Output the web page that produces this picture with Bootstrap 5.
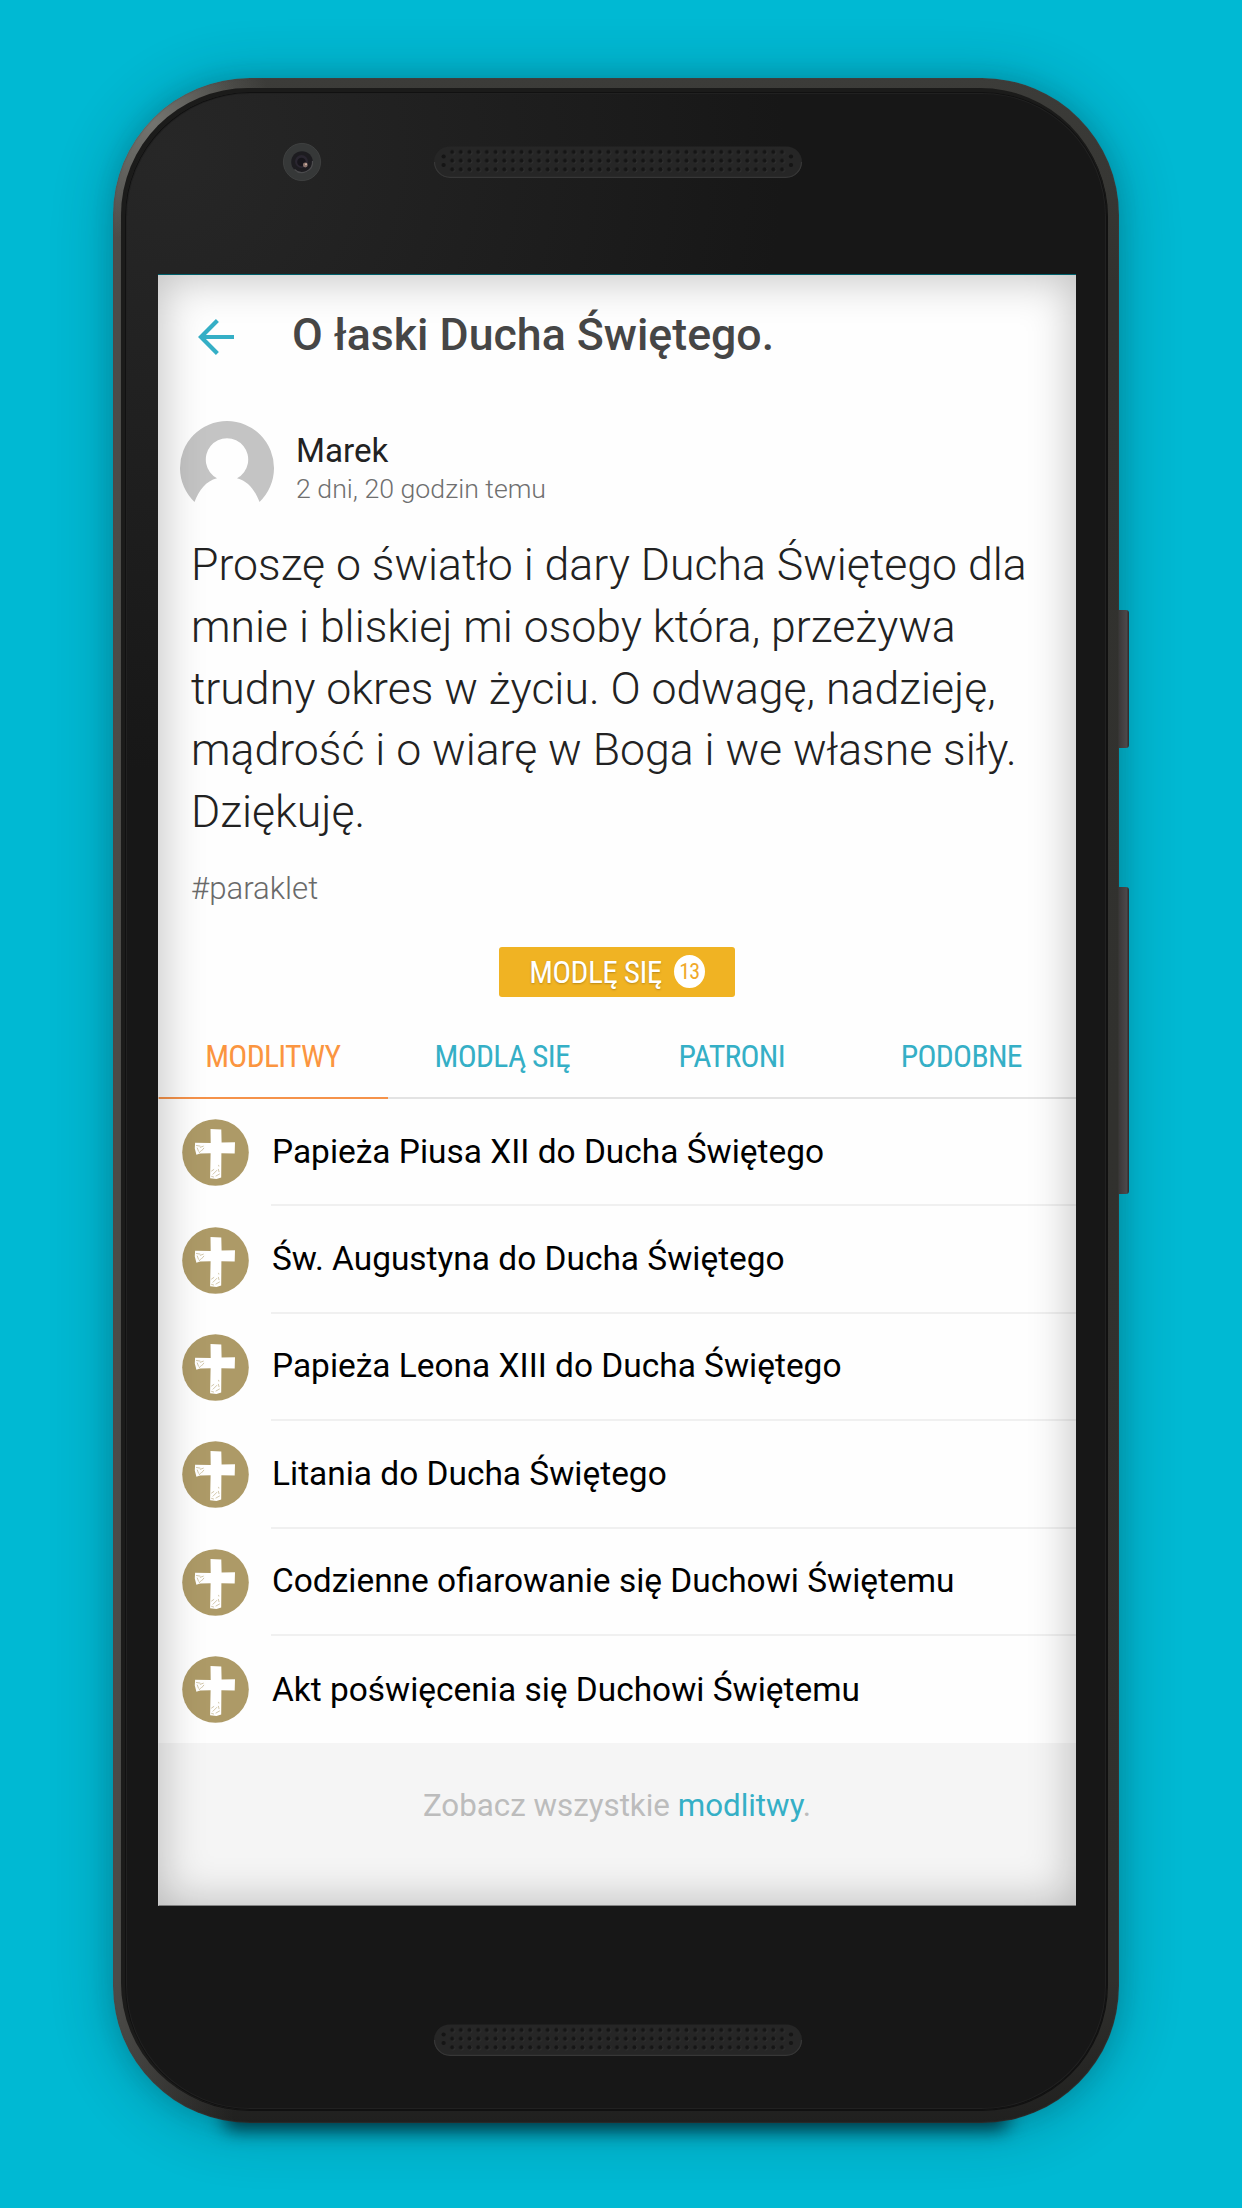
<!DOCTYPE html>
<html lang="pl">
<head>
<meta charset="utf-8">
<meta name="viewport" content="width=device-width, initial-scale=1">
<title>O łaski Ducha Świętego.</title>
<link rel="stylesheet" href="https://cdn.jsdelivr.net/npm/bootstrap@5.3.0/dist/css/bootstrap.min.css">
<style>
  body { background: #00b9d3; font-family: Roboto, "Liberation Sans", sans-serif; height: 2208px; overflow: hidden; padding: 78px 0 0 113px; }
  .phone {
    width: 1006px; height: 2045px; padding: 14px 12px 13px; border-radius: 137px;
    background: radial-gradient(circle 120px at 40px 45px, rgba(130,130,125,.75), rgba(130,130,125,0)), linear-gradient(90deg, rgba(95,94,91,.6) 0, rgba(95,94,91,0) 12%), linear-gradient(180deg, #3c3c39 0, #32322f 10%, #30302d 93%, #20201f 100%);
    box-shadow: inset 0 0 2px #444, 0 4px 60px rgba(0,35,45,.30), 0 0 22px rgba(0,40,50,.14);
  }
  .ground-shadow { left: 110px; right: 110px; bottom: 2px; height: 24px; border-radius: 12px; background: #10343a; box-shadow: 0 9px 18px rgba(0,20,28,.75); z-index: -1; }
  .side-key { left: 1006px; width: 10px; border-radius: 0 3px 3px 0; background: linear-gradient(90deg, #3b3839, #4b484a 75%, #2a2a2a); }
  .key-power { top: 532px; height: 138px; }
  .key-volume { top: 809px; height: 307px; }
  .glass {
    border-radius: 125px; padding: 182px 0 0 33px;
    background: radial-gradient(ellipse 620px 620px at 40px 60px, #272727, rgba(24,24,24,0)), #171717;
    box-shadow: inset 0 0 0 1px #111, inset 0 0 0 2px #212121, -2px -2px 0 2px #1b1b1a, 0 0 0 1px #111;
  }
  .glass > .grille { left: 50%; transform: translateX(-50%); margin-left: 2px; width: 370px; height: 34px; }
  .grille-top { top: 53px; }
  .grille-bottom { top: 1931px; }
  .lens { left: 157px; top: 50px; width: 40px; height: 40px; }
  .screen { width: 918px; height: 1632px; background: #fefefe; border-top: 1px solid #00606b; }
  .screen::after { content: ""; position: absolute; inset: 0; box-shadow: inset 0 0 44px 4px rgba(0,0,0,.24), inset 1px 0 0 rgba(255,255,255,.6), inset 0 -1px 0 rgba(60,60,60,.5); pointer-events: none; }
  .app-bar { height: 121px; padding-left: 40px; gap: 58px; }
  .app-bar svg { margin-top: 2px; }
  .app-title { font-size: 44.65px; font-weight: 500; color: #464646; line-height: 1.2; }
  .author { padding: 25px 22px 0; gap: 22px; }
  .author-name { font-size: 33.2px; line-height: 38px; color: #222; margin-top: 11px; }
  .author-time { font-size: 26.7px; line-height: 38px; font-weight: 300; color: #6f6f6f; }
  .prayer-text { margin: 20px 0 0 33px; width: 860px; font-size: 44.6px; line-height: 61.8px; font-weight: 300; color: #222; }
  .prayer-tag { margin: 25px 0 0 33px; font-size: 31.2px; line-height: 40px; font-weight: 300; color: #6a6a6a; }
  .narrow { font-family: "Roboto Condensed", Roboto, sans-serif; }
  .btn-pray, .btn-pray:hover { width: 236px; height: 50px; margin-top: 38px; padding: 2px 0 0; border: 0; border-radius: 3px; background: #f0b323; color: #fff; font-size: 31.4px; letter-spacing: -.6px; line-height: 50px; gap: 12px; text-shadow: 0 1px 2px rgba(90,60,0,.35); }
  .pray-count { width: 31px; height: 33px; margin-top: -2px; border-radius: 50%; background: #fff; color: #f0a92a; font-size: 22px; line-height: 33px; letter-spacing: -.9px; text-shadow: none; }
  .tab-strip { margin-top: 18px; height: 84px; border: 0; box-shadow: inset 0 -2px 0 #e3e3e3; }
  .tab-strip .nav-link { padding: 0; border-radius: 0; height: 84px; line-height: 83px; font-size: 31.6px; letter-spacing: -.7px; color: #35afc6; }
  .tab-strip .nav-link.active { color: #fb9540; background: none; box-shadow: inset 0 -2px 0 #f5924a; }
  .prayer-row { height: 107.4px; padding-left: 24px; gap: 22px; }
  .prayer-name { font-size: 33.45px; color: #000; border-bottom: 2px solid #f0f0f0; padding-left: 1px; }
  .more { height: 164px; padding-top: 41px; background: #f5f5f5; color: #bcbcbc; font-size: 31.3px; line-height: 44px; }
  .more a { color: #35afc6; }
</style>
</head>
<body>
<svg width="0" height="0" class="position-absolute" aria-hidden="true">
  <defs>
    <pattern id="holes" width="8.68" height="8.68" patternUnits="userSpaceOnUse" x="14.9" y="2.7">
      <circle cx="4.9" cy="4.9" r="2.3" fill="#353535"/><circle cx="4.3" cy="4.3" r="2.1" fill="#151515"/>
    </pattern>
    <symbol id="grille" viewBox="0 0 370 34">
      <rect x="1" y="1.5" width="368" height="31" rx="15.5" fill="#262626"/>
      <path d="M1.5 17A15.5 15.5 0 0 0 17 32.3H353A15.5 15.5 0 0 0 368.5 17" fill="none" stroke="#373737" stroke-width="1.2"/>
      <rect x="14.9" y="2.7" width="338.5" height="26.1" fill="url(#holes)"/>
      <g fill="#151515"><circle cx="10.6" cy="11.5" r="2.1"/><circle cx="10.6" cy="20" r="2.1"/><circle cx="358" cy="11.5" r="2.1"/><circle cx="358" cy="20" r="2.1"/></g>
    </symbol>
    <symbol id="cross" viewBox="0 0 67 67">
      <circle cx="33.5" cy="33.5" r="33.3" fill="#ad9a67"/>
      <path d="M28.5 10l10.8.5.3 13 13.4-.2-.3 11.2-13.3-.2-.2 24.3-4.7 1.3-6.4-.6.5-25.1-10.4.3-3.8 1.2-1.6-6.2.3-5.8 15.6.2z" fill="#fff"/>
      <g fill="none" stroke="#ad9a67" stroke-width=".9" stroke-linecap="round" opacity=".6">
        <path d="M14.5 26.5l3.500.6M15.300 29l1.200 3.200M18.300 28.300l3-1.100M19.500 31.800l2.300-2.600M17.200 33.800l1.500-1.800"/>
        <path d="M29.600 52l2.200-1.500M31 55.200l3.800-3.800M34 57l3.500-2M36.400 50.300l.6 2.400M29.600 57.400l2 .6M36.600 46.300l.2.8"/>
      </g>
    </symbol>
  </defs>
</svg>

<main class="phone position-relative">
  <div class="ground-shadow position-absolute"></div>
  <div class="side-key key-power position-absolute"></div>
  <div class="side-key key-volume position-absolute"></div>

  <div class="glass position-relative h-100">
    <svg class="lens position-absolute" viewBox="0 0 40 40" aria-hidden="true">
      <circle cx="20" cy="20" r="18.6" fill="#363838" stroke="#424444" stroke-width=".8"/>
      <circle cx="20" cy="20" r="10.8" fill="#1d1c20"/>
      <path d="M12.5 27.5A10.6 10.6 0 0 0 30.5 19" fill="none" stroke="#4b4b4d" stroke-width="1.2"/>
      <circle cx="19.5" cy="19.5" r="6.5" fill="#2a2630"/><circle cx="19.5" cy="20" r="4.3" fill="#17151b"/>
      <circle cx="23.3" cy="23" r="2.4" fill="#8b736d"/><circle cx="24" cy="22.3" r="1" fill="#d4b5a5"/>
    </svg>
    <svg class="grille grille-top position-absolute" aria-hidden="true"><use href="#grille"/></svg>
    <svg class="grille grille-bottom position-absolute" aria-hidden="true"><use href="#grille"/></svg>

    <div class="screen position-relative d-flex flex-column">
      <header class="app-bar d-flex align-items-center flex-shrink-0">
        <svg width="36" height="36" viewBox="0 0 36 36" fill="none" stroke="#35afc6" stroke-width="4.2" aria-label="Wstecz"><path d="M36 18H3M19.4 1.6L3 18l16.400 16.400"/></svg>
        <h1 class="app-title mb-0">O łaski Ducha Świętego.</h1>
      </header>

      <section class="author d-flex align-items-start">
        <svg width="94" height="94" viewBox="0 0 94 94" aria-hidden="true">
          <path d="M14.5 81A47 47 0 1 1 79.500 81C75 69 68 60 57 57.200A21.200 21.200 0 1 0 37 57.200C26 60 19 69 14.500 81Z" fill="#c4c4c4"/>
        </svg>
        <div>
          <div class="author-name">Marek</div>
          <div class="author-time">2 dni, 20 godzin temu</div>
        </div>
      </section>

      <p class="prayer-text">Proszę o światło i dary Ducha Świętego dla<br>mnie i bliskiej mi osoby która, przeżywa<br>trudny okres w życiu. O odwagę, nadzieję,<br>mądrość i o wiarę w Boga i we własne siły.<br>Dziękuję.</p>
      <div class="prayer-tag">#paraklet</div>

      <button type="button" class="btn btn-pray narrow d-flex justify-content-center align-items-center align-self-center flex-shrink-0">MODLĘ SIĘ<span class="pray-count text-center">13</span></button>

      <nav class="tab-strip nav nav-justified narrow flex-shrink-0">
        <a class="nav-link active" href="#">MODLITWY</a>
        <a class="nav-link" href="#">MODLĄ SIĘ</a>
        <a class="nav-link" href="#">PATRONI</a>
        <a class="nav-link" href="#">PODOBNE</a>
      </nav>

      <div class="d-flex flex-column">
        <div class="prayer-row d-flex align-items-center"><svg class="flex-shrink-0" width="67" height="67" aria-hidden="true"><use href="#cross"/></svg><div class="prayer-name flex-grow-1 h-100 d-flex align-items-center">Papieża Piusa XII do Ducha Świętego</div></div>
        <div class="prayer-row d-flex align-items-center"><svg class="flex-shrink-0" width="67" height="67" aria-hidden="true"><use href="#cross"/></svg><div class="prayer-name flex-grow-1 h-100 d-flex align-items-center">Św. Augustyna do Ducha Świętego</div></div>
        <div class="prayer-row d-flex align-items-center"><svg class="flex-shrink-0" width="67" height="67" aria-hidden="true"><use href="#cross"/></svg><div class="prayer-name flex-grow-1 h-100 d-flex align-items-center">Papieża Leona XIII do Ducha Świętego</div></div>
        <div class="prayer-row d-flex align-items-center"><svg class="flex-shrink-0" width="67" height="67" aria-hidden="true"><use href="#cross"/></svg><div class="prayer-name flex-grow-1 h-100 d-flex align-items-center">Litania do Ducha Świętego</div></div>
        <div class="prayer-row d-flex align-items-center"><svg class="flex-shrink-0" width="67" height="67" aria-hidden="true"><use href="#cross"/></svg><div class="prayer-name flex-grow-1 h-100 d-flex align-items-center">Codzienne ofiarowanie się Duchowi Świętemu</div></div>
        <div class="prayer-row d-flex align-items-center"><svg class="flex-shrink-0" width="67" height="67" aria-hidden="true"><use href="#cross"/></svg><div class="prayer-name flex-grow-1 h-100 d-flex align-items-center border-0">Akt poświęcenia się Duchowi Świętemu</div></div>
      </div>

      <footer class="more text-center flex-grow-1">Zobacz wszystkie <a class="text-decoration-none" href="#">modlitwy</a>.</footer>
    </div>
  </div>
</main>
<script src="https://cdn.jsdelivr.net/npm/bootstrap@5.3.0/dist/js/bootstrap.bundle.min.js"></script>
</body>
</html>
